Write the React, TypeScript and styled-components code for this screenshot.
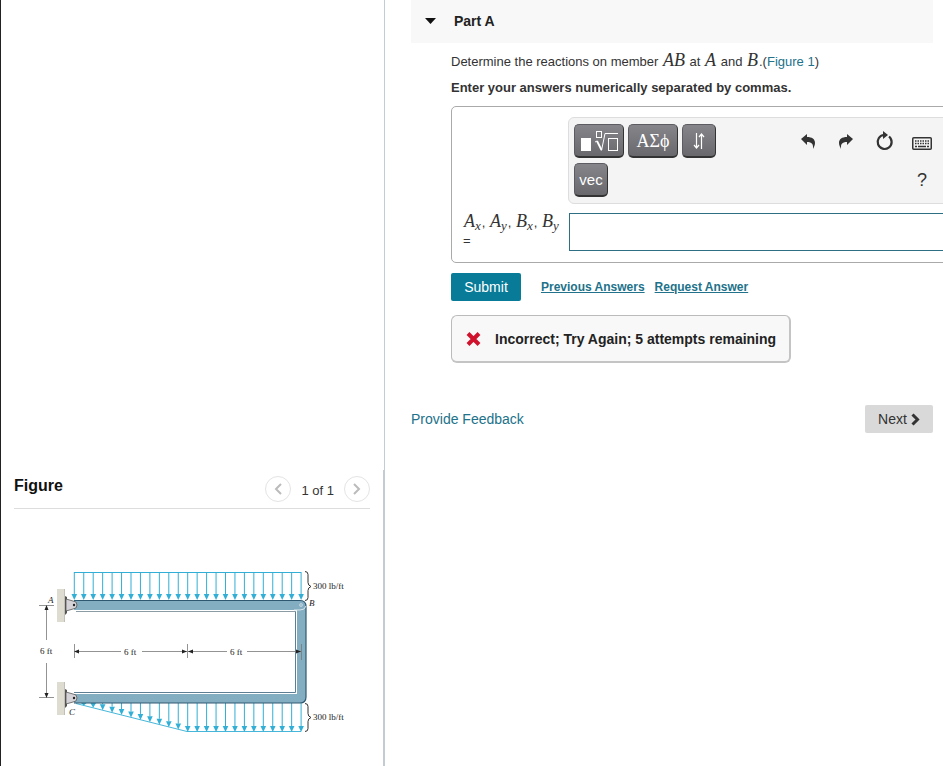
import React from "react";
import styled, { createGlobalStyle } from "styled-components";

const GlobalStyle = createGlobalStyle`
  *, *::before, *::after { box-sizing: border-box; }
  body {
    margin: 0;
    background: #fff;
    color: #333;
    font-family: "Liberation Sans", Arial, sans-serif;
    font-size: 13px;
    line-height: 16px;
  }
  button, input { font: inherit; color: inherit; }
  a { color: #21728a; text-decoration: none; }
`;

const Page = styled.div`
  display: flex;
  min-height: 100vh;
`;

const Sidebar = styled.aside`
  flex: 0 0 385px;
  display: flex;
  flex-direction: column;
  border-left: 1px solid #222;
`;

const SidebarSpace = styled.div`
  flex: 1 0 0;
  border-right: 1px solid #c3ccd3;
`;

const FigurePanel = styled.section`
  flex: none;
  padding: 5px 13px 22px;
  border-right: 2px solid #c3ccd3;
`;

const FigureHeader = styled.header`
  display: flex;
  justify-content: space-between;
  align-items: center;
  height: 34px;
  border-bottom: 1px solid #ddd;
`;

const FigureTitle = styled.h2`
  margin: 0 0 12px;
  color: #111;
  font-size: 16px;
  line-height: 20px;
`;

const Pager = styled.nav`
  display: flex;
  align-items: center;
  gap: 10px;
  padding-bottom: 6px;
`;

const PagerButton = styled.button`
  display: grid;
  place-items: center;
  width: 26px;
  height: 26px;
  padding: 0;
  border: 1px solid #e4e4e4;
  border-radius: 50%;
  background: #fff;
  color: #bbb;
`;

const PagerText = styled.span`
  padding-top: 4px;
`;

const Drawing = styled.svg`
  display: block;
  width: 100%;
  margin-top: 51px;
  font-family: "Liberation Serif", serif;
  font-size: 9px;
`;

const Main = styled.main`
  flex: 1;
  min-width: 0;
  padding: 0 10px 0 26px;
  overflow: hidden;
`;

const PartHeader = styled.header`
  display: flex;
  align-items: center;
  gap: 18px;
  height: 43px;
  padding: 0 14px 2px;
  background: #f8f8f8;
`;

const Toggle = styled.button`
  display: grid;
  padding: 0;
  border: 0;
  background: none;
  color: #111;
`;

const PartTitle = styled.h1`
  margin: 0;
  color: #222;
  font-size: 14px;
  line-height: 16px;
`;

const PartBody = styled.div`
  padding: 9px 0 0 40px;
`;

const Question = styled.p`
  margin: 0;
  line-height: 20px;
`;

const Instruction = styled.p`
  margin: 8px 0 10px;
  font-weight: bold;
`;

const MathText = styled.i`
  margin: 0 1px;
  font-family: "Liberation Serif", serif;
  font-size: 18px;
  line-height: 16px;

  sub {
    font-size: 13px;
    line-height: 0;
    vertical-align: -3px;
  }
`;

const AnswerBox = styled.div`
  display: grid;
  grid-template-columns: 116px 1fr;
  row-gap: 9px;
  margin-right: -12px;
  padding: 10px 0 11px;
  border: 1px solid #aaa;
  border-radius: 5px 0 0 5px;
`;

const Toolbar = styled.div`
  grid-column: 2;
  display: flex;
  justify-content: space-between;
  padding: 6px 2px 6px 5px;
  border: 1px solid #ddd;
  border-radius: 6px 0 0 6px;
  background: #f4f4f4;
`;

const TemplateTools = styled.div`
  display: flex;
  flex-wrap: wrap;
  gap: 5px 4px;
  width: 142px;
`;

const TemplateButton = styled.button<{ $wide?: boolean; $serif?: boolean }>`
  display: grid;
  place-items: center;
  width: ${(p) => (p.$wide ? 50 : 34)}px;
  height: 34px;
  padding: 0;
  border: 1px solid #5c5c62;
  border-right-color: #333;
  border-bottom: 2px solid #333;
  border-radius: 5px;
  background: linear-gradient(#85858a, #68686d);
  color: #fff;
  font-family: ${(p) => (p.$serif ? '"Liberation Serif", serif' : "inherit")};
  font-size: ${(p) => (p.$serif ? 18 : 15)}px;
`;

const ActionTools = styled.div`
  display: grid;
  grid-template-columns: repeat(4, 38px);
  grid-auto-rows: 34px;
  row-gap: 5px;
`;

const ActionButton = styled.button<{ $last?: boolean }>`
  display: grid;
  place-items: center;
  grid-column: ${(p) => (p.$last ? 4 : "auto")};
  padding: 0;
  border: 0;
  background: none;
  color: #333;
  font-size: 18px;
`;

const AnswerLabel = styled.label`
  padding-left: 11px;
  line-height: 18px;
`;

const AnswerName = styled.span`
  display: block;
  white-space: nowrap;
`;

const AnswerInput = styled.input`
  width: calc(100% - 1px);
  height: 38px;
  margin-left: 1px;
  padding: 0 8px;
  border: 1px solid #2f6f83;
  border-right: 0;
  border-radius: 0;
  outline: 0;
  background: #fff;
`;

const Actions = styled.div`
  display: flex;
  align-items: center;
  gap: 10px;
  margin-top: 10px;
`;

const SubmitButton = styled.button`
  width: 70px;
  height: 28px;
  margin-right: 10px;
  padding: 0;
  border: 0;
  border-radius: 2px;
  background: #077b98;
  color: #fff;
  font-size: 14px;
`;

const ActionLink = styled.a`
  font-size: 12px;
  font-weight: bold;
  text-decoration: underline;
`;

const Feedback = styled.div`
  display: inline-flex;
  align-items: center;
  gap: 14px;
  height: 48px;
  margin-top: 14px;
  padding: 0 13px 0 14px;
  border: 1px solid #bbb;
  border-right: 2px solid #c4c4c4;
  border-bottom: 2px solid #c4c4c4;
  border-radius: 6px;
  background: #f8f8f8;
  color: #222;
  font-size: 14px;
  font-weight: bold;
  white-space: nowrap;
`;

const PageFooter = styled.footer`
  display: flex;
  justify-content: space-between;
  align-items: center;
  margin-top: 42px;
  font-size: 14px;
`;

const NextButton = styled.button`
  display: flex;
  align-items: center;
  justify-content: center;
  gap: 4px;
  width: 68px;
  height: 28px;
  padding: 0;
  border: 0;
  border-radius: 2px;
  background: #d9d9d9;
`;

const BLUE = "#31afd6";
const BEAM = "#83aec2";

const Chevron = ({ left = false }: { left?: boolean }) => (
  <svg width="10" height="12" viewBox="0 0 10 12" fill="none" stroke="currentColor" strokeWidth="2">
    <path d={left ? "M8 1 3 6l5 5" : "M2 1l5 5-5 5"} />
  </svg>
);

const LoadArrow = ({ x, from, to }: { x: number; from: number; to: number }) => {
  const head = Math.min(6, to - from);
  return (
    <g>
      <path d={`M${x} ${from}V${to - head}`} stroke={BLUE} />
      <path d={`M${x - 2.8} ${to - head}h5.6l-2.8 ${head}z`} fill={BLUE} />
    </g>
  );
};

const Support = ({ y }: { y: number }) => (
  <g>
    <rect x="43" y={y - 16} width="8" height="33" fill="#dedcd0" />
    <path d={`M50.5 ${y - 16}v33`} stroke="#c2c0b5" />
    <path d={`M51 ${y - 9}l2 1v16l-2 2z`} fill="#555" />
    <path
      d={`M52 ${y - 6}l7 2q4 0 4 4t-4 4l-7 2z`}
      fill="#d5d3d8"
      stroke="#555"
      strokeWidth="0.8"
    />
    <circle cx="60" cy={y} r="1.2" fill="#222" />
  </g>
);

const steps = Array.from({ length: 25 }, (_, i) => i);

const FrameDrawing = () => (
  <Drawing viewBox="0 0 356 184" role="img" aria-label="Frame ABC with distributed loads of 300 lb/ft">
    <path d="M60 12.5H287" stroke={BLUE} />
    {steps.map((i) => (
      <LoadArrow key={i} x={60.3 + i * 9.45} from={12} to={40} />
    ))}
    <path d="M62 143.5 173 171.5H287" fill="none" stroke={BLUE} strokeWidth="0.9" />
    {steps.slice(1).map((i) => (
      <LoadArrow key={i} x={60.3 + i * 9.45} from={143} to={143 + Math.min(1, i / 12) * 29} />
    ))}

    <path d="M60 40H286q6 0 6 6V137q0 6-6 6H60V134H283V50H60z" fill={BEAM} />
    <path d="M60 132.5H281.5V51.5" fill="none" stroke="#5e7f93" />
    <path d="M62 51.5H282" stroke="#8b9ca5" />
    <path d="M60 40.5H286q6 0 6 6V137q0 6-6 6H60" fill="none" stroke="#2e5870" strokeWidth="1.2" />
    <circle cx="287" cy="45" r="1.5" fill="#9fbfce" stroke="#c6d8e0" strokeWidth="0.8" />
    <path d="M280 50h6q5 0 6-4" fill="none" stroke="#dce6eb" />
    <Support y={45} />
    <Support y={138} />

    <g fill="none" stroke="#333">
      <path d="M291 11.5q3 0 3 3v8q0 3 3 4-3 1-3 4v7q0 3-3 3" />
      <path d="M291 143.5q3 0 3 3v7q0 3 3 4-3 1-3 4v7q0 3-3 3" />
    </g>

    <g stroke="#777" strokeWidth="0.8">
      <path d="M25 45.5h15M25 137.5h15M32.5 46v34M32.5 103v34" />
      <path d="M60.5 84v14M173.5 84v14M287.5 84v16" />
      <path d="M61 91.5h46M128 91.5h45M174 91.5h39M233 91.5h54" />
    </g>
    <g fill="#222">
      <path d="M32.5 45l2 5h-4zM32.5 138l2-5h-4z" />
      <path d="M60 91.5l5-2v4zM173 91.5l-5-2v4zM174 91.5l5-2v4zM287 91.5l-5-2v4z" />
    </g>

    <g fill="#222">
      <text x="34" y="43" fontStyle="italic">A</text>
      <text x="295" y="46" fontStyle="italic">B</text>
      <text x="55" y="155" fontStyle="italic">C</text>
      <text x="26" y="94">6 ft</text>
      <text x="110" y="95">6 ft</text>
      <text x="216" y="95">6 ft</text>
      <text x="299" y="29">300 lb/ft</text>
      <text x="299" y="160">300 lb/ft</text>
    </g>
  </Drawing>
);

const RootIcon = () => (
  <svg width="38" height="24" viewBox="0 0 38 24" fill="none" stroke="#fff">
    <rect x="1" y="9" width="10" height="13" fill="#fff" stroke="none" />
    <rect x="16.5" y="2.5" width="5" height="6" />
    <path d="M15 13l2-1" />
    <path d="M17 12l4.5 9" strokeWidth="1.8" />
    <path d="M21.5 21.5L25 4.500h13" />
    <rect x="28.5" y="9.5" width="9" height="12" />
  </svg>
);

const UpDownIcon = () => (
  <svg width="14" height="18" viewBox="0 0 14 18" fill="none" stroke="#fff" strokeWidth="1.2">
    <path d="M4.500 1v14.500M2 13l2.500 3 2.500-3M9.500 17V2.500M7 5l2.500-3L12 5" />
  </svg>
);

const UndoIcon = () => (
  <svg width="14" height="16" viewBox="0 0 14 16" fill="currentColor">
    <path d="M0 6 6 1v3c5 0 8 2 8 6 0 2-1 4-2 6 .4-5-1-7-6-7v3z" />
  </svg>
);

const RedoIcon = () => (
  <svg width="14" height="16" viewBox="0 0 14 16" fill="currentColor">
    <path d="M14 6 8 1v3C3 4 0 6 0 10c0 2 1 4 2 6-.4-5 1-7 6-7v3z" />
  </svg>
);

const ResetIcon = () => (
  <svg width="18" height="20" viewBox="0 0 18 20">
    <path d="M14 5.500A7 7 0 1 1 9 4" fill="none" stroke="currentColor" strokeWidth="2.2" />
    <path d="M8 0l5 4-5 4z" fill="currentColor" />
  </svg>
);

const KeyboardIcon = () => (
  <svg width="20" height="17" viewBox="0 -4 20 17" fill="none" stroke="currentColor">
    <rect x="0.75" y="0.75" width="18.5" height="11.5" rx="1" strokeWidth="1.5" />
    <path d="M3 4h14M3 6.500h14" strokeWidth="1.5" strokeDasharray="1.5 1" />
    <path d="M3 9.500h2M6 9.500h8M15 9.500h2" strokeWidth="1.5" />
  </svg>
);

const CrossIcon = () => (
  <svg width="15" height="14" viewBox="0 0 15 14" stroke="#d0122d" strokeWidth="4">
    <path d="M2 1.500l11 11M13 1.500l-11 11" />
  </svg>
);

export default function App() {
  return (
    <>
      <GlobalStyle />
      <Page>
        <Sidebar>
          <SidebarSpace />
          <FigurePanel>
            <FigureHeader>
              <FigureTitle>Figure</FigureTitle>
              <Pager aria-label="Figures">
                <PagerButton type="button" aria-label="Previous figure"><Chevron left /></PagerButton>
                <PagerText>1 of 1</PagerText>
                <PagerButton type="button" aria-label="Next figure"><Chevron /></PagerButton>
              </Pager>
            </FigureHeader>
            <FrameDrawing />
          </FigurePanel>
        </Sidebar>

        <Main>
          <PartHeader>
            <Toggle type="button" aria-label="Collapse Part A">
              <svg width="11" height="6" viewBox="0 0 11 6"><path d="M0 0h11L5.500 6z" fill="currentColor" /></svg>
            </Toggle>
            <PartTitle>Part A</PartTitle>
          </PartHeader>

          <PartBody>
            <Question>
              Determine the reactions on member <MathText>AB</MathText> at <MathText>A</MathText> and{" "}
              <MathText>B</MathText>.(<a href="#figure-1">Figure 1</a>)
            </Question>
            <Instruction>Enter your answers numerically separated by commas.</Instruction>

            <AnswerBox>
              <Toolbar role="toolbar" aria-label="Equation tools">
                <TemplateTools>
                  <TemplateButton type="button" $wide aria-label="Templates"><RootIcon /></TemplateButton>
                  <TemplateButton type="button" $wide $serif>ΑΣϕ</TemplateButton>
                  <TemplateButton type="button" aria-label="Subscripts and arrows"><UpDownIcon /></TemplateButton>
                  <TemplateButton type="button">vec</TemplateButton>
                </TemplateTools>
                <ActionTools>
                  <ActionButton type="button" aria-label="Undo"><UndoIcon /></ActionButton>
                  <ActionButton type="button" aria-label="Redo"><RedoIcon /></ActionButton>
                  <ActionButton type="button" aria-label="Reset"><ResetIcon /></ActionButton>
                  <ActionButton type="button" aria-label="Keyboard shortcuts"><KeyboardIcon /></ActionButton>
                  <ActionButton type="button" $last>?</ActionButton>
                </ActionTools>
              </Toolbar>
              <AnswerLabel htmlFor="answer">
                <AnswerName>
                  <MathText>A<sub>x</sub></MathText>, <MathText>A<sub>y</sub></MathText>,{" "}
                  <MathText>B<sub>x</sub></MathText>, <MathText>B<sub>y</sub></MathText>
                </AnswerName>
                =
              </AnswerLabel>
              <AnswerInput id="answer" type="text" />
            </AnswerBox>

            <Actions>
              <SubmitButton type="submit">Submit</SubmitButton>
              <ActionLink href="#previous">Previous Answers</ActionLink>
              <ActionLink href="#request">Request Answer</ActionLink>
            </Actions>

            <Feedback role="status">
              <CrossIcon />
              Incorrect; Try Again; 5 attempts remaining
            </Feedback>
          </PartBody>

          <PageFooter>
            <a href="#feedback">Provide Feedback</a>
            <NextButton type="button">
              Next
              <svg width="9" height="13" viewBox="0 0 9 13" fill="none" stroke="currentColor" strokeWidth="3">
                <path d="M1.500 1.500l5 5-5 5" />
              </svg>
            </NextButton>
          </PageFooter>
        </Main>
      </Page>
    </>
  );
}
